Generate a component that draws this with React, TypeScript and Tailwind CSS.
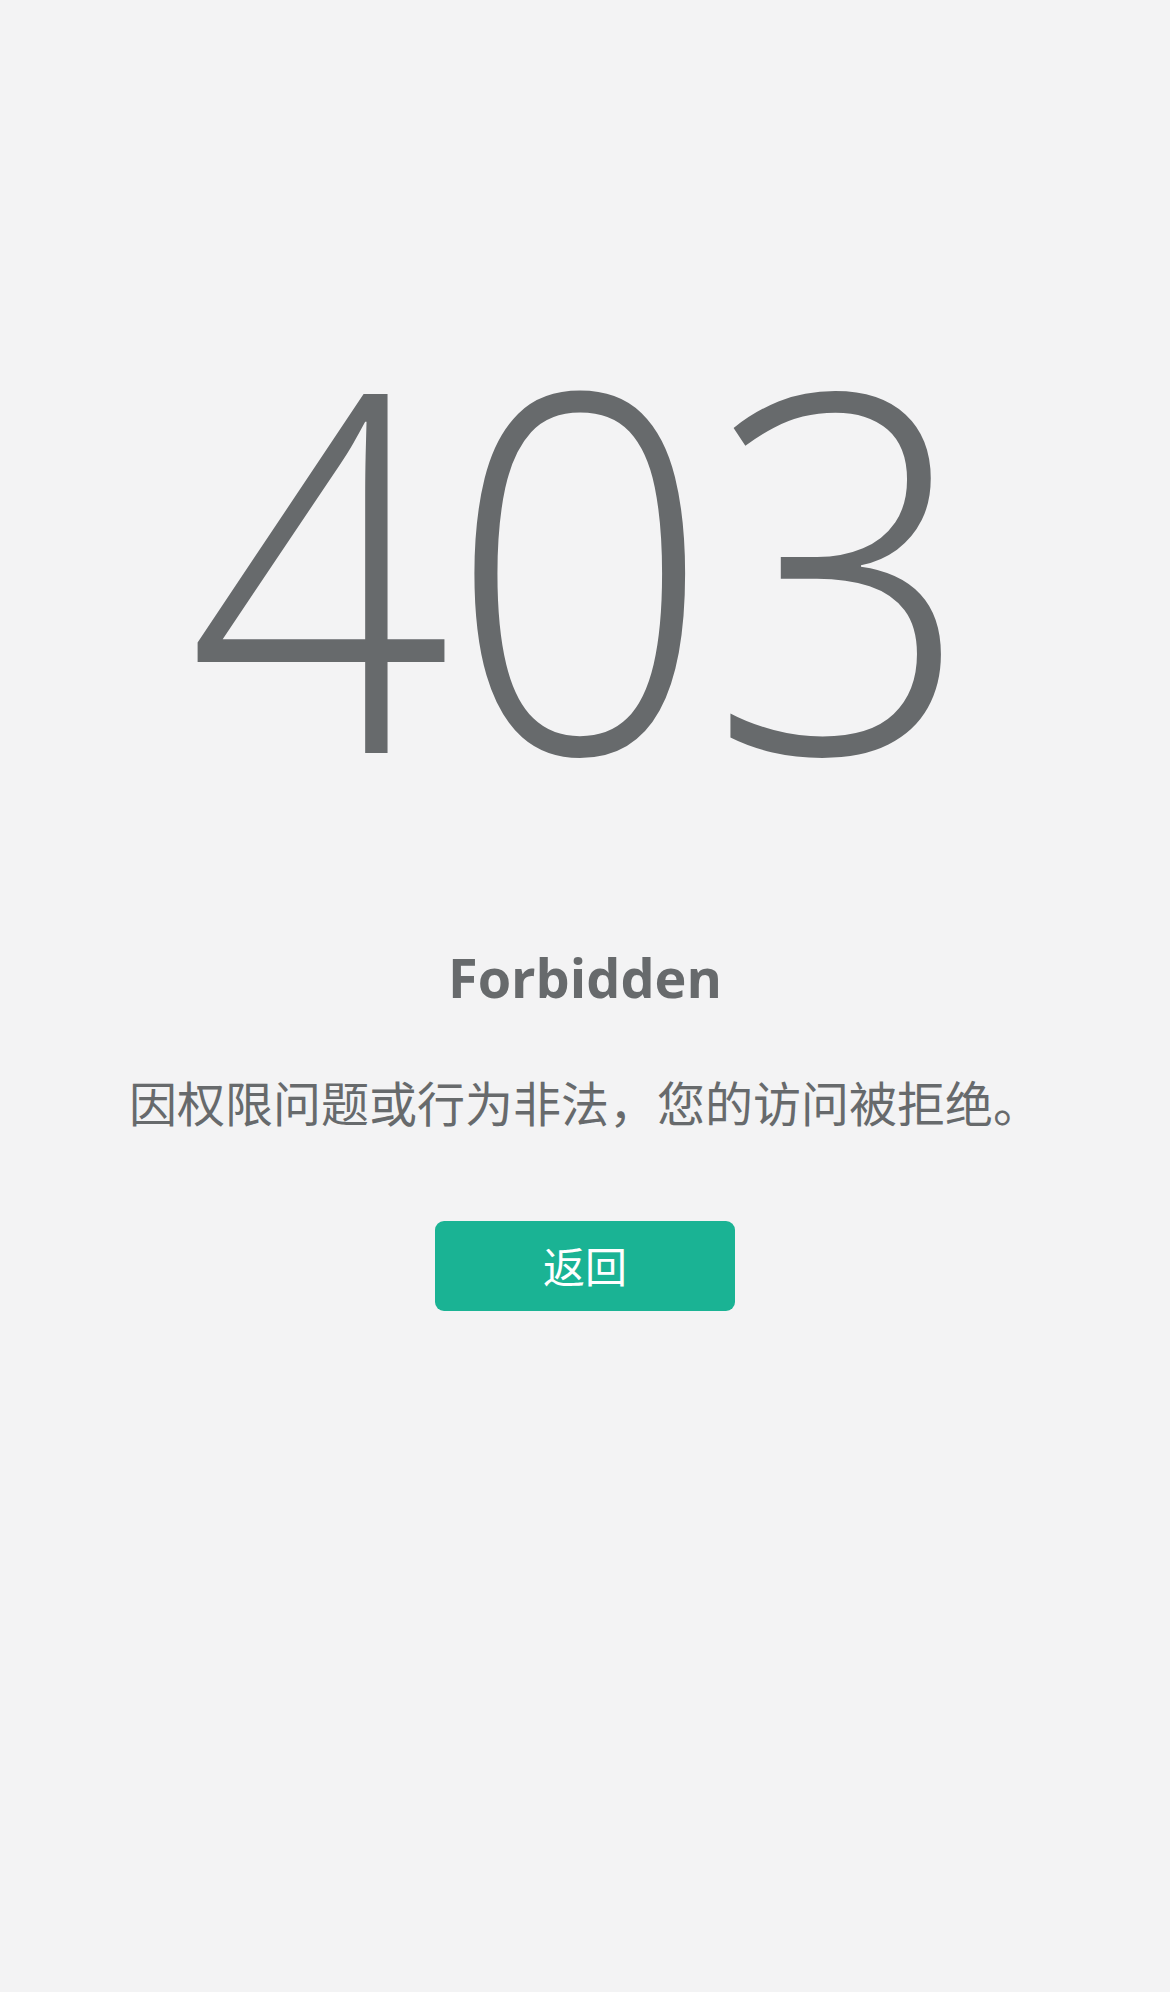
import React from "react";

export default function App() {
  return (
    <div className="min-h-[1992px] w-full bg-[#f3f3f4] flex flex-col items-center pt-[309px] text-[#676a6c] font-['Open_Sans','Noto_Sans_CJK_SC',sans-serif]">
      <h1 className="m-0 mr-[12px] h-[500px] text-[500px] leading-[500px] font-light tracking-[-3px] scale-x-[0.925]">
        403
      </h1>
      <h3 className="mt-[138px] h-[60px] text-[54px] leading-[60px] font-bold">
        Forbidden
      </h3>
      <p className="mt-[70px] h-[48px] text-[48px] leading-[48px] whitespace-nowrap font-['Noto_Sans_CJK_SC',sans-serif]">
        因权限问题或行为非法，您的访问被拒绝。
      </p>
      <button className="mt-[96px] flex h-[90px] w-[300px] items-center justify-center rounded-[9px] bg-[#1ab394] pb-[4px] text-[42px] text-white font-['Noto_Sans_CJK_SC',sans-serif]">
        返回
      </button>
    </div>
  );
}
